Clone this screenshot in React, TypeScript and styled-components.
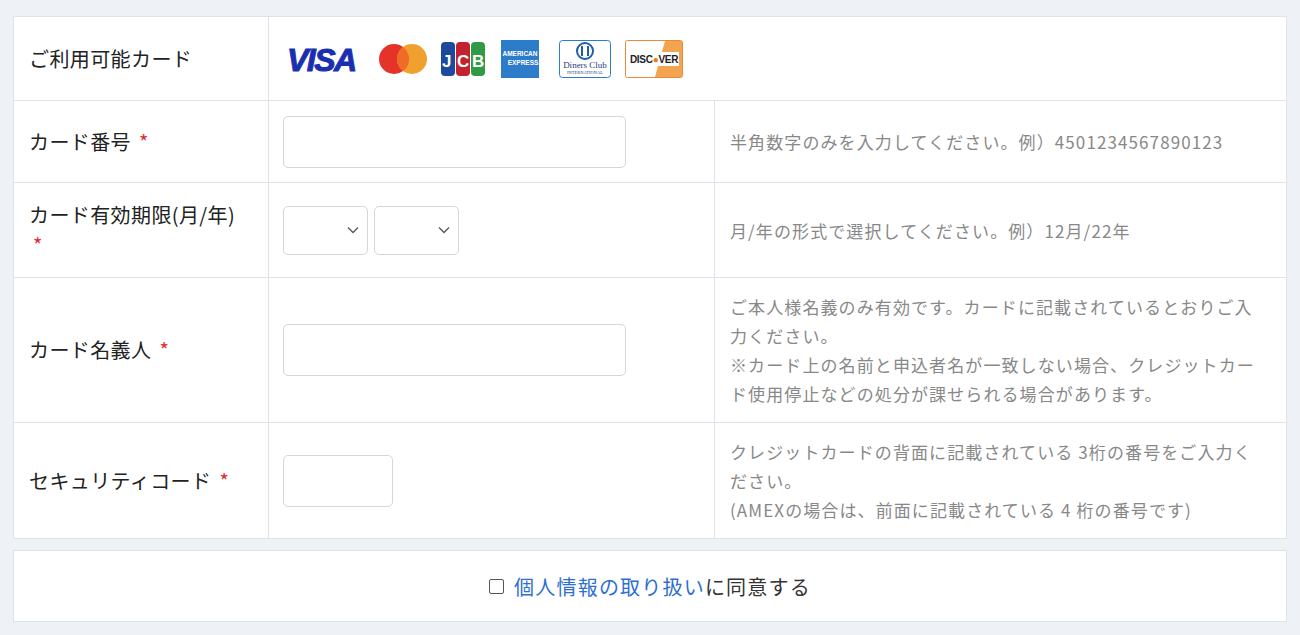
import styled, { createGlobalStyle } from 'styled-components';

const Global = createGlobalStyle`
  body {
    margin: 0;
    background: #eef2f6;
    font-family: "Noto Sans CJK JP", "Noto Sans", sans-serif;
  }
`;

const Page = styled.div`
  padding: 16px 13px;
  display: flex;
  flex-direction: column;
  gap: 11px;
`;

const Table = styled.div`
  display: grid;
  grid-template-columns: 255px 446px 1fr;
  grid-template-rows: 84px 82px 95px 145px 115px;
  background: #fff;
  border: 1px solid #dde3ea;
`;

const Label = styled.div`
  display: flex;
  align-items: center;
  padding: 0 15px;
  font-size: 20px;
  letter-spacing: 0.4px;
  color: #222;
  border-bottom: 1px solid #dde3ea;
  border-right: 1px solid #dde3ea;
  line-height: 1.5;
`;

const Cell = styled.div<{ $span?: boolean; $last?: boolean }>`
  display: flex;
  align-items: center;
  gap: 6px;
  padding: 0 14px;
  border-bottom: ${(p) => (p.$last ? 'none' : '1px solid #dde3ea')};
  border-right: ${(p) => (p.$span ? 'none' : '1px solid #dde3ea')};
  grid-column: ${(p) => (p.$span ? 'span 2' : 'auto')};
`;

const Help = styled.div<{ $last?: boolean }>`
  display: flex;
  align-items: center;
  padding: 0 22px 0 15px;
  font-size: 17px;
  letter-spacing: 1.1px;
  line-height: 29px;
  color: #888;
  border-bottom: ${(p) => (p.$last ? 'none' : '1px solid #dde3ea')};
`;

const Req = styled.span`
  color: #e0292b;
  margin-left: 8px;
`;

const Input = styled.input<{ $w: number }>`
  width: ${(p) => p.$w}px;
  height: 52px;
  box-sizing: border-box;
  border: 1px solid #d3d6da;
  border-radius: 5px;
`;

const Select = styled.div`
  width: 85px;
  height: 49px;
  box-sizing: border-box;
  border: 1px solid #d3d6da;
  border-radius: 5px;
  display: flex;
  align-items: center;
  justify-content: flex-end;
  padding-right: 8px;
`;

const Logos = styled.div`
  display: flex;
  align-items: center;
  padding-left: 2px;
`;

const Agree = styled.div`
  height: 70px;
  background: #fff;
  border: 1px solid #dde3ea;
  display: flex;
  align-items: center;
  justify-content: center;
  font-size: 20px;
  letter-spacing: 1.2px;
  color: #333;
  gap: 10px;
`;

const Box = styled.span`
  width: 13px;
  height: 13px;
  border: 1px solid #555;
  border-radius: 2px;
`;

const Link = styled.a`
  color: #2f6fd0;
  text-decoration: none;
`;

const Chevron = () => (
  <svg width="12" height="8" viewBox="0 0 12 8"><path d="M1 1.5l5 5 5-5" fill="none" stroke="#555" strokeWidth="1.3" /></svg>
);

const CardLogos = () => (
  <Logos>
    <svg width="86" height="34" viewBox="0 0 86 34">
      <text x="2" y="29" fontFamily="Liberation Sans" fontStyle="italic" fontWeight="900" fontSize="32" fill="#1a2fb0" letterSpacing="-1.5" stroke="#1a2fb0" strokeWidth="1">VISA</text>
    </svg>
    <svg width="56" height="36" viewBox="0 0 56 36" style={{ marginLeft: 6 }}>
      <circle cx="17" cy="18" r="15" fill="#e5332a" />
      <circle cx="35" cy="18" r="15" fill="#f0a02f" />
      <path d="M26 5.9a15 15 0 0 1 0 24.2a15 15 0 0 1 0-24.2z" fill="#f06a28" />
    </svg>
    <svg width="46" height="36" viewBox="0 0 46 36" style={{ marginLeft: 8 }}>
      <rect x="0" y="1" width="14" height="34" rx="4" fill="#1d4a9c" />
      <rect x="15" y="1" width="14" height="34" rx="4" fill="#c2232f" />
      <rect x="30" y="1" width="14" height="34" rx="4" fill="#2f9b47" />
      <text x="1" y="26" fontFamily="Liberation Sans" fontWeight="900" fontSize="17" fill="#fff">J</text>
      <text x="16" y="26" fontFamily="Liberation Sans" fontWeight="900" fontSize="17" fill="#fff">C</text>
      <text x="31" y="26" fontFamily="Liberation Sans" fontWeight="900" fontSize="17" fill="#fff">B</text>
    </svg>
    <svg width="38" height="38" viewBox="0 0 38 38" style={{ marginLeft: 14 }}>
      <rect x="0" y="0" width="38" height="38" fill="#2c7cc9" />
      <text x="19" y="16" textAnchor="middle" fontFamily="Liberation Sans" fontWeight="700" fontSize="6.5" fill="#fff">AMERICAN</text>
      <text x="22" y="25" textAnchor="middle" fontFamily="Liberation Sans" fontWeight="700" fontSize="6.5" fill="#fff">EXPRESS</text>
    </svg>
    <svg width="52" height="38" viewBox="0 0 52 38" style={{ marginLeft: 20 }}>
      <rect x="0.5" y="0.5" width="51" height="37" rx="3" fill="#fff" stroke="#2c7cc9" />
      <circle cx="26" cy="11" r="8" fill="none" stroke="#1d5ea8" strokeWidth="2" />
      <rect x="22" y="6" width="2" height="10" fill="#1d5ea8" />
      <rect x="28" y="6" width="2" height="10" fill="#1d5ea8" />
      <text x="26" y="28" textAnchor="middle" fontFamily="Liberation Serif" fontSize="9" fill="#1d3e7a">Diners Club</text>
      <text x="26" y="34" textAnchor="middle" fontFamily="Liberation Serif" fontSize="4.5" fill="#1d3e7a">INTERNATIONAL</text>
    </svg>
    <svg width="60" height="38" viewBox="0 0 60 38" style={{ marginLeft: 14 }}>
      <rect x="0.5" y="0.5" width="57" height="37" rx="2" fill="#fff" stroke="#e98a3a" />
      <path d="M40 1h17v36H30z" fill="#f19a3e" opacity="0.9" />
      <rect x="4" y="12" width="50" height="14" fill="#fff" />
      <text x="29" y="23" textAnchor="middle" fontFamily="Liberation Sans" fontWeight="700" fontSize="10" fill="#222" letterSpacing="-0.3">DISC<tspan fill="#f07a1a">●</tspan>VER</text>
    </svg>
  </Logos>
);

export default function App() {
  return (
    <>
      <Global />
      <Page>
        <Table>
          <Label>ご利用可能カード</Label>
          <Cell $span><CardLogos /></Cell>

          <Label>カード番号<Req>*</Req></Label>
          <Cell><Input $w={343} /></Cell>
          <Help>半角数字のみを入力してください。例）4501234567890123</Help>

          <Label><div>カード有効期限(月/年)<br /><Req style={{ marginLeft: 4 }}>*</Req></div></Label>
          <Cell>
            <Select><Chevron /></Select>
            <Select><Chevron /></Select>
          </Cell>
          <Help>月/年の形式で選択してください。例）12月/22年</Help>

          <Label>カード名義人<Req>*</Req></Label>
          <Cell><Input $w={343} /></Cell>
          <Help>ご本人様名義のみ有効です。カードに記載されているとおりご入力ください。<br />※カード上の名前と申込者名が一致しない場合、クレジットカード使用停止などの処分が課せられる場合があります。</Help>

          <Label style={{ borderBottom: 'none' }}>セキュリティコード<Req>*</Req></Label>
          <Cell $last><Input $w={110} /></Cell>
          <Help $last>クレジットカードの背面に記載されている 3桁の番号をご入力ください。<br />(AMEXの場合は、前面に記載されている 4 桁の番号です)</Help>
        </Table>
        <Agree>
          <Box />
          <span><Link href="#">個人情報の取り扱い</Link>に同意する</span>
        </Agree>
      </Page>
    </>
  );
}
